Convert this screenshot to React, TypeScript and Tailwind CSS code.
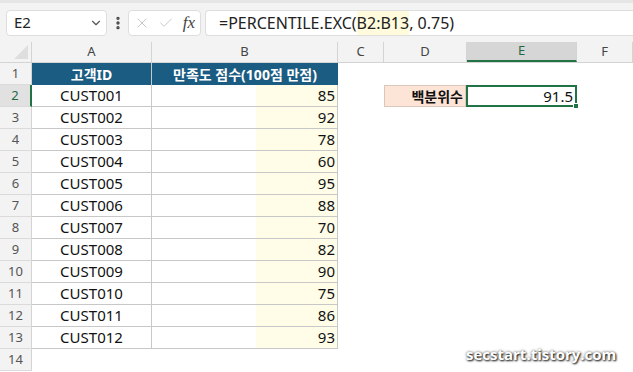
import { ChevronDown, X, Check, EllipsisVertical } from 'lucide-react';

const font = '[font-family:"Noto_Sans","Noto_Sans_CJK_KR",sans-serif]';

const data = [
  ['CUST001', 85],
  ['CUST002', 92],
  ['CUST003', 78],
  ['CUST004', 60],
  ['CUST005', 95],
  ['CUST006', 88],
  ['CUST007', 70],
  ['CUST008', 82],
  ['CUST009', 90],
  ['CUST010', 75],
  ['CUST011', 86],
  ['CUST012', 93],
];

const cols = [
  { k: 'A', w: 'w-[120px]' },
  { k: 'B', w: 'w-[186px]' },
  { k: 'C', w: 'w-[46px]' },
  { k: 'D', w: 'w-[83px]' },
  { k: 'E', w: 'w-[110px]' },
  { k: 'F', w: 'flex-1' },
];

function RowHead({ n, active }: { n: number; active?: boolean }) {
  return (
    <div
      className={
        'w-[32px] shrink-0 h-full flex items-center justify-center text-[13px] border-b border-[#dadada] ' +
        (active
          ? 'bg-[#e1e1e1] text-[#1e6b41] border-r-2 border-r-[#217346]'
          : 'bg-[#f3f3f3] text-[#555] border-r border-r-[#d4d4d4]')
      }
    >
      {n}
    </div>
  );
}

export default function App() {
  return (
    <div className={`w-[633px] h-[372px] overflow-hidden bg-white relative ${font}`}>
      {/* formula bar */}
      <div className="h-[42px] bg-[#f3f3f3] border-t-[3px] border-[#e6e6e6] flex items-center pl-[6px] gap-[2px]">
        <div className="w-[101px] h-[26px] bg-white border border-[#dedede] rounded-[4px] flex items-center justify-between pl-[7px] pr-[3px] text-[15px] text-[#222]">
          <span>E2</span>
          <ChevronDown className="w-[14px] h-[14px] text-[#555]" strokeWidth={2} />
        </div>
        <EllipsisVertical className="w-[16px] h-[16px] text-[#444] ml-[1px]" strokeWidth={3} />
        <div className="w-[73px] h-[26px] bg-white border border-[#dedede] rounded-[4px] flex items-center justify-between px-[5px]">
          <X className="w-[16px] h-[16px] text-[#c8c8c8]" strokeWidth={1.5} />
          <Check className="w-[16px] h-[16px] text-[#c8c8c8]" strokeWidth={1.5} />
          <span className="[font-family:'Liberation_Serif',serif] italic text-[17px] text-[#444] leading-none">fx</span>
        </div>
        <div className="flex-1 ml-[2px] h-[26px] bg-white border border-[#dedede] rounded-l-[4px] border-r-0 flex items-center pl-[13px] text-[16px] text-[#222] whitespace-nowrap">
          <span>=PERCENTILE.EXC(</span>
          <span className="bg-[#fffbdc]">B2:B13</span>
          <span>, 0.75)</span>
        </div>
      </div>

      {/* column headers */}
      <div className="h-[21px] flex bg-[#f3f3f3] border-b border-[#d4d4d4]">
        <div className="w-[32px] shrink-0 border-r border-[#d4d4d4] relative">
          <div className="absolute right-[3px] bottom-[3px] w-0 h-0 border-l-[14px] border-l-transparent border-b-[14px] border-b-[#dedede]" />
        </div>
        {cols.map((c) => (
          <div
            key={c.k}
            className={
              `${c.w} shrink-0 h-full flex items-center justify-center text-[13px] border-r border-[#d4d4d4] ` +
              (c.k === 'E' ? 'bg-[#d6d6d6] text-[#1e6b41] border-b-2 border-b-[#217346]' : 'text-[#444]')
            }
          >
            {c.k}
          </div>
        ))}
      </div>

      {/* row 1 */}
      <div className="h-[22px] flex">
        <RowHead n={1} />
        <div className="w-[120px] shrink-0 bg-[#1b5c82] text-white font-bold text-[14px] flex items-center justify-center border-r border-[#c8c8c8]">
          고객ID
        </div>
        <div className="w-[186px] shrink-0 bg-[#1b5c82] text-white font-bold text-[14px] flex items-center justify-center">
          만족도 점수(100점 만점)
        </div>
      </div>

      {data.map(([id, score], i) => (
        <div key={id} className="h-[22px] flex">
          <RowHead n={i + 2} active={i === 0} />
          <div className="w-[120px] shrink-0 flex items-center justify-center text-[15px] text-[#111] border-r border-b border-[#c8c8c8]">
            {id}
          </div>
          <div className="w-[186px] shrink-0 flex border-r border-b border-[#c8c8c8]">
            <div className="w-[104px]" />
            <div className="flex-1 bg-[#fffde8] flex items-center justify-end pr-[2px] text-[15px] text-[#111]">
              {score}
            </div>
          </div>
          {i === 0 && (
            <>
              <div className="w-[46px] shrink-0" />
              <div className="w-[82px] shrink-0 bg-[#fce4d6] border border-[#dcc6b9] flex items-center justify-end pr-[2px] text-[14px] font-bold text-[#111]">
                백분위수
              </div>
              <div className="w-[111px] shrink-0 relative border-2 border-[#217346] flex items-center justify-end pr-[2px] text-[15px] text-[#111]">
                91.5
                <div className="absolute -right-[4px] -bottom-[4px] w-[6px] h-[6px] bg-[#217346] border border-white" />
              </div>
            </>
          )}
        </div>
      ))}

      <div className="h-[22px] flex">
        <RowHead n={14} />
      </div>

      <div className="absolute left-[466px] top-[343px] text-white font-bold text-[15px] [text-shadow:1px_1px_2px_rgba(0,0,0,0.9),0_0_3px_rgba(0,0,0,0.6)] [font-family:'Open_Sans',sans-serif]">
        secstart.tistory.com
      </div>
    </div>
  );
}
